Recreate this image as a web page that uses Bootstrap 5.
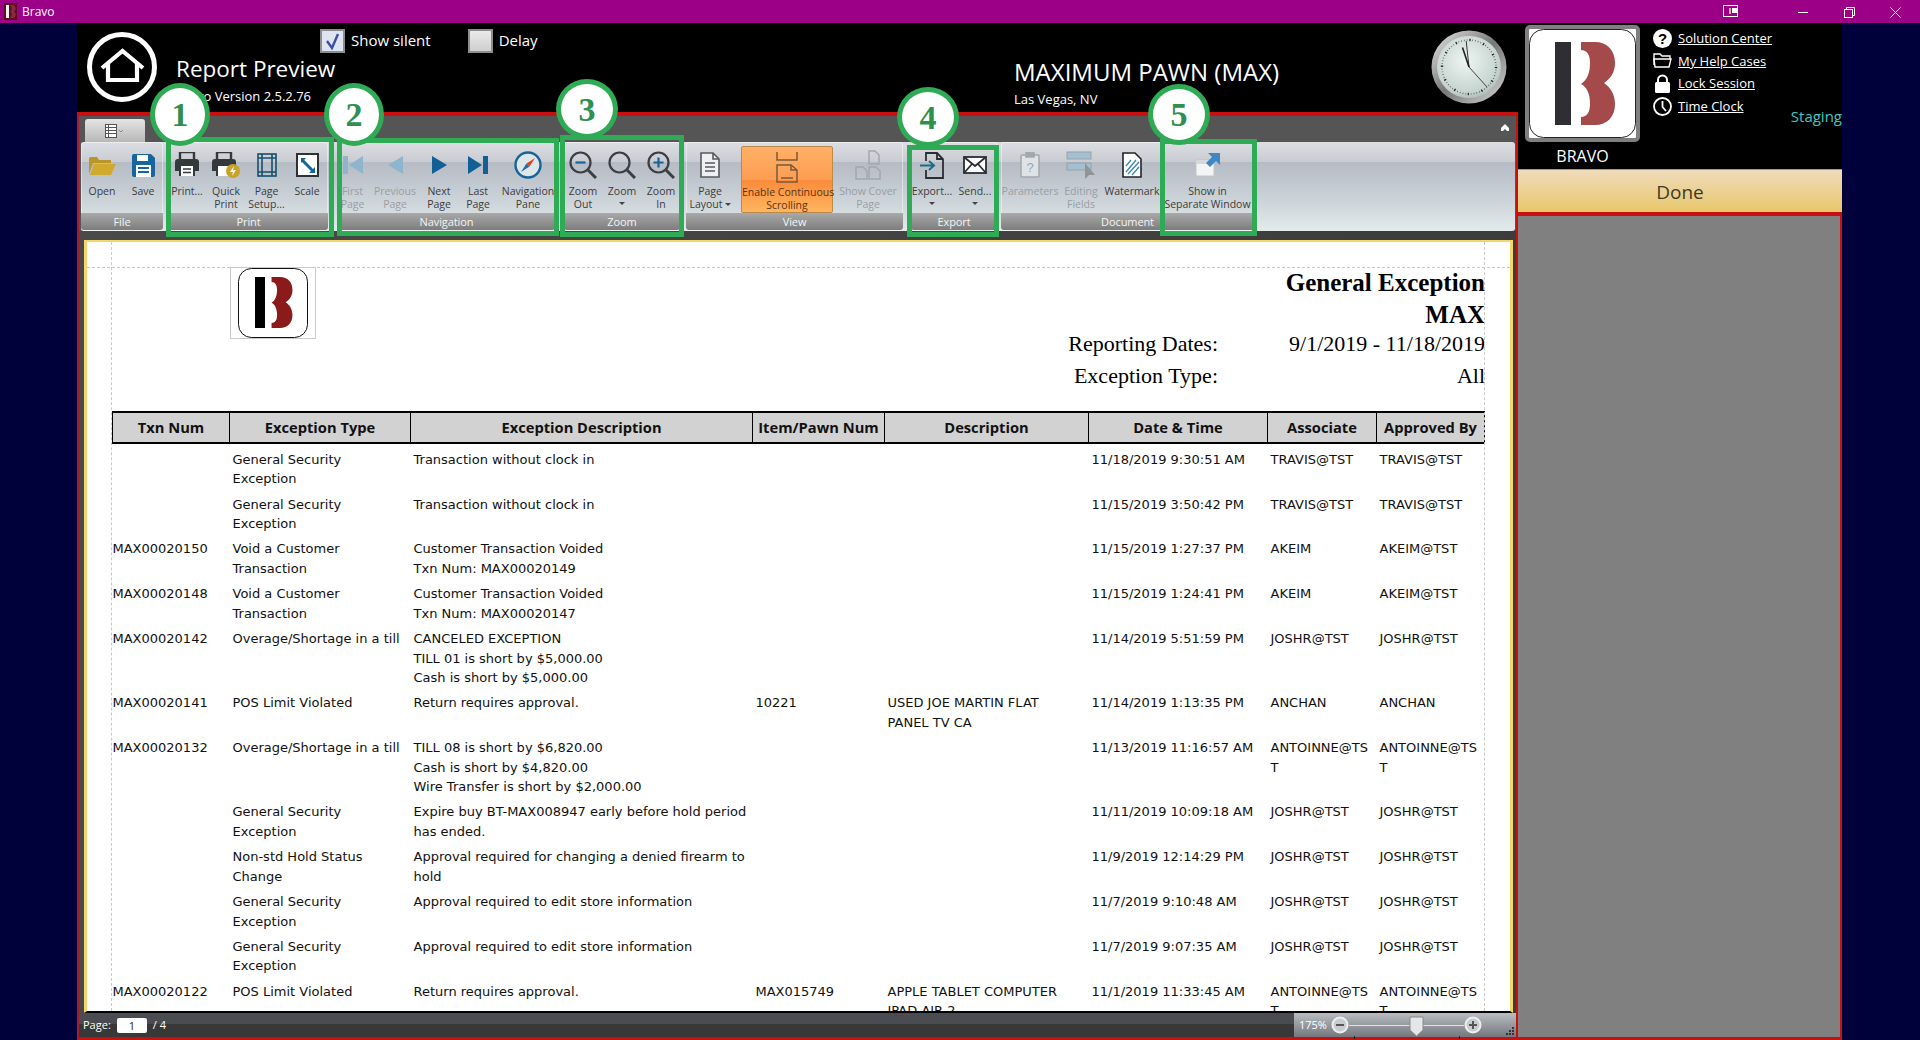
<!DOCTYPE html>
<html lang="en">

<head>
    <meta charset="UTF-8" />
    <meta name="viewport" content="width=device-width, initial-scale=1.0" />
    <title>Bravo - Report Preview</title>
    <link href="https://cdn.jsdelivr.net/npm/bootstrap@5.3.0/dist/css/bootstrap.min.css" rel="stylesheet" />
    <style>
        html,
        body {
            height: 100%;
        }

        body {
            background-color: #00003a;
            font-family: "Open Sans", "Noto Sans", sans-serif;
            color: #fff;
            overflow: hidden;
            position: relative;
        }

        /* window chrome */
        .title-strip {
            height: 23px;
            background-color: #9b0086;
            font-size: 12px;
        }

        .title-strip .app-name {
            margin-left: 5px;
        }

        .win-btn {
            width: 46px;
        }

        .win-snap {
            margin-right: 41px;
        }

        .win-set {
            margin-right: 2px;
        }

        .shell {
            height: 1017px;
            width: 1765px;
            margin-left: 77px;
        }

        .left-side {
            width: 1441px;
        }

        .right-side {
            width: 324px;
        }

        /* top header */
        .top-head {
            height: 90px;
            background: #000;
        }

        .home-btn {
            width: 70px;
            height: 70px;
            margin: 9px 0 0 10px;
        }

        .title-col {
            width: 838px;
            margin-left: 19px;
        }

        .check-row {
            height: 32px;
            margin-left: 144px;
            padding-top: 6px;
            font-size: 15px;
        }

        .fake-check {
            width: 25px;
            height: 24px;
            background: linear-gradient(#e9e9e9, #cfcfcf);
            border: 2px solid #8d8d8d;
            margin-right: 6px;
        }

        .fake-check.is-on {
            background: #dfe4f2;
        }

        .check-gap {
            margin-right: 37px;
        }

        .report-title {
            font-size: 22.5px;
            line-height: 28px;
        }

        .report-ver {
            font-size: 13px;
            line-height: 17px;
            margin-top: 5px;
        }

        .store-col {
            width: 417px;
            padding-top: 34px;
        }

        .store-name {
            font-size: 24px;
            line-height: 30px;
        }

        .store-city {
            font-size: 13px;
            line-height: 18px;
            margin-top: 3px;
        }

        .clock-face {
            width: 76px;
            height: 74px;
            margin-top: 7px;
        }

        /* report frame */
        .report-frame {
            border-top: 4px solid #c81010;
            border-left: 2px solid #a81a2a;
            border-right: 2px solid #c81010;
            border-bottom: 3px solid #c81010;
            background: #555;
            min-height: 0;
        }

        .tab-row {
            height: 26px;
            padding-left: 6px;
            padding-right: 6px;
        }

        .ribbon-tab {
            width: 60px;
            height: 23px;
            margin-top: 3px;
            background: linear-gradient(#e4e4e4, #b8b8b8);
            border-radius: 3px 3px 0 0;
        }

        .ribbon-strip {
            height: 89px;
            margin-left: 2px;
            margin-right: 1px;
            background: linear-gradient(#dcdee2 0, #c9ccd2 22%, #b6bbc4 23%, #cbd2d8 64%, #e4ebeb 100%);
            border-radius: 3px;
            color: #3c3c3c;
        }

        .rb-group {
            border-radius: 3px;
            box-shadow: inset 0 0 0 1px rgba(255, 255, 255, .45);
        }

        .rb-btns {
            height: 71px;
        }

        .rb-cap {
            height: 17px;
            line-height: 17px;
            background: linear-gradient(#a9a9a9, #7d7d7d);
            color: #f4f4f4;
            font-size: 11px;
            text-align: center;
            border-radius: 0 0 3px 3px;
            letter-spacing: -.1px;
        }

        .rb-btn {
            flex: none;
            font-size: 10.5px;
            line-height: 13px;
            text-align: center;
            white-space: nowrap;
        }

        .rb-ico {
            height: 43px;
            display: flex;
            align-items: center;
            justify-content: center;
            padding-top: 3px;
        }

        .rb-off {
            color: #9a9ea3;
        }

        .rb-on {
            background: linear-gradient(#ffb066 0, #fd9e52 50%, #fb8b3a 51%, #ffb560 100%);
            border: 1px solid #b98a4a;
            border-radius: 2px;
            height: 67px;
            margin-top: 4px;
            color: #5a3413;
        }

        .rb-on .rb-ico {
            height: 39px;
            padding-top: 0;
        }

        .tiny-caret {
            display: block;
            width: 0;
            height: 0;
            margin: 4px auto 0;
            border-left: 3px solid transparent;
            border-right: 3px solid transparent;
            border-top: 3px solid #444;
        }

        .tiny-caret.inline-caret {
            display: inline-block;
            margin: 0 0 2px 2px;
        }

        .w29 { width: 29px; }
        .w32 { width: 32px; }
        .w36 { width: 36px; }
        .w38 { width: 38px; }
        .w39 { width: 39px; }
        .w40 { width: 40px; }
        .w42 { width: 42px; }
        .w44 { width: 44px; }
        .w46 { width: 46px; }
        .w48 { width: 48px; }
        .w54 { width: 54px; }
        .w56 { width: 56px; }
        .w58 { width: 58px; }
        .w70 { width: 70px; }
        .w92 { width: 92px; }
        .w93 { width: 93px; }

        .gl4 { margin-left: 4px; }
        .gl6 { margin-left: 6px; }
        .gl7 { margin-left: 7px; }
        .gl8 { margin-left: 8px; }
        .gl9 { margin-left: 9px; }
        .gl10 { margin-left: 10px; }

        /* viewer */
        .viewer-area {
            min-height: 0;
            padding: 9px 0 0 5px;
            background: linear-gradient(90deg, #4a4a4a, #3c3c3c);
        }

        .sheet {
            position: relative;
            background: #fff;
            border-left: 3px solid #f5d66b;
            border-right: 3px solid #f5d66b;
            border-top: 2px solid #f5d66b;
            border-bottom: 2px solid #000;
            margin-right: 3px;
            overflow: hidden;
            color: #000;
        }

        .guide-h {
            position: absolute;
            left: 0;
            right: 0;
            top: 25px;
            border-top: 1px dashed #c9c9c9;
        }

        .guide-v1,
        .guide-v2 {
            position: absolute;
            top: 0;
            bottom: 0;
            border-left: 1px dashed #c9c9c9;
        }

        .guide-v1 {
            left: 24px;
        }

        .guide-v2 {
            left: 1397px;
        }

        .sheet-head {
            height: 146px;
            margin-top: 23px;
            padding-left: 143px;
            padding-right: 25px;
            font-family: "Liberation Serif", serif;
        }

        .sheet-logo {
            width: 86px;
            height: 72px;
            margin-top: 2px;
            border: 1px solid #ccc;
        }

        .sheet-titles {
            padding-top: 2px;
        }

        .sheet-title {
            font-size: 25px;
            font-weight: 700;
            line-height: 32px;
        }

        .sheet-row {
            font-size: 22px;
            line-height: 24px;
            margin-bottom: 8px;
        }

        .sheet-row.first-row {
            margin-top: 1px;
        }

        .sheet-label {
            width: 344px;
        }

        .sheet-value {
            width: 267px;
        }

        .rpt-table {
            table-layout: fixed;
            width: 1372px;
            margin-left: 25px;
            font-family: "DejaVu Sans", sans-serif;
            font-size: 13px;
            line-height: 19.5px;
            color: #111;
            white-space: nowrap;
        }

        .rpt-table th {
            background: #d2d2d2;
            border: 2px solid #000;
            border-width: 2px 1px 2px 1px;
            height: 31px;
            padding: 0;
            font-family: "Open Sans", sans-serif;
            font-size: 14.7px;
            font-weight: 700;
            text-align: center;
            vertical-align: middle;
        }

        .rpt-table td {
            padding: 5.8px 3px 0 3px;
            vertical-align: top;
            overflow: hidden;
        }

        .rpt-table td:first-child {
            padding-left: 0;
        }

        .c1 { width: 117px; }
        .c2 { width: 181px; }
        .c3 { width: 342px; }
        .c4 { width: 132px; }
        .c5 { width: 204px; }
        .c6 { width: 179px; }
        .c7 { width: 109px; }
        .c8 { width: 108px; }

        /* status bar */
        .status-bar {
            height: 24px;
            background: linear-gradient(#4b4c52 0, #4b4c52 45%, #383838 46%, #383838 100%);
            font-size: 11px;
        }

        .page-box {
            width: 30px;
            height: 15px;
            background: #fff;
            color: #222;
            border-radius: 2px;
            line-height: 15px;
            text-align: center;
            margin: 0 6px 0 6px;
        }

        .page-txt {
            margin-left: 4px;
        }

        .zoom-zone {
            width: 222px;
            height: 24px;
            position: relative;
            background: linear-gradient(#b9bcc0, #74787e);
            padding-left: 5px;
        }

        .zoom-track {
            width: 115px;
            border-top: 1px solid #dfe2e4;
            position: relative;
        }

        .zoom-track::before,
        .zoom-track::after {
            content: "";
            position: absolute;
            top: 10px;
            height: 3px;
            border-left: 1px solid #222;
        }

        .zoom-track::before {
            left: 5px;
        }

        .zoom-track::after {
            left: 110px;
        }

        .zoom-thumb {
            position: absolute;
            left: 60px;
            top: -10px;
        }

        .zoom-grip {
            position: absolute;
            right: 1px;
            bottom: 1px;
        }

        /* right panel */
        .side-head {
            height: 146px;
            background: #000;
            padding: 2px 0 0 7px;
        }

        .big-logo {
            width: 115px;
            height: 117px;
            border: 4px solid #7f7f7f;
            border-radius: 5px;
            background: #fff;
        }

        .big-logo-name {
            width: 115px;
            text-align: center;
            font-size: 16px;
            line-height: 20px;
            margin-top: 4px;
        }

        .help-links {
            margin-left: 13px;
            padding-top: 2px;
            font-size: 13px;
        }

        .help-item {
            height: 22.6px;
            line-height: 22px;
        }

        .help-item a {
            color: #fff;
            margin-left: 6px;
        }

        .help-ico {
            width: 19px;
            height: 19px;
        }

        .staging-tag {
            position: absolute;
            right: 78px;
            top: 105px;
            color: #40c8c0;
            font-size: 15px;
        }

        .done-bar {
            height: 43px;
            padding-top: 2px;
            background: linear-gradient(#f0dcbc, #e8c76a);
            border-top: 1px solid #9a9a9a;
            color: #3d3a2a;
            font-size: 19px;
        }

        .side-pane {
            background: #808080;
            border-top: 4px solid #c81010;
            border-right: 2px solid #c81010;
            border-bottom: 3px solid #c81010;
        }

        /* green numbered callouts */
        .call-box {
            position: absolute;
            border: 5px solid #2faa55;
        }

        .box-a { left: 166px; top: 137px; width: 168px; height: 100px; }
        .box-b { left: 337px; top: 138px; width: 222px; height: 98px; }
        .box-c { left: 560px; top: 135px; width: 124px; height: 102px; }
        .box-d { left: 907px; top: 145px; width: 92px; height: 92px; }
        .box-e { left: 1160px; top: 139px; width: 97px; height: 97px; }

        .call-dot {
            position: absolute;
            border: 5px solid #2faa55;
            border-radius: 50%;
            background: #fff;
            color: #2f8f4e;
            font-family: "Liberation Serif", serif;
            font-weight: 700;
            font-size: 34px;
        }

        .dot-a { left: 150px; top: 83px; width: 60px; height: 63px; }
        .dot-b { left: 324px; top: 83px; width: 60px; height: 63px; }
        .dot-c { left: 556px; top: 79px; width: 62px; height: 60px; }
        .dot-d { left: 897px; top: 87px; width: 62px; height: 60px; }
        .dot-e { left: 1148px; top: 84px; width: 62px; height: 61px; }
    </style>
</head>

<body>
    <svg width="0" height="0" class="position-absolute">
        <symbol id="bravo-b" viewBox="0 0 34 83">
            <path d="M0 0H14C26 0 34 8 34 21C34 31 29 37 23 41C29 45 34 52 34 62C34 75 26 83 14 83H0V75C6 75 9 70 9 62C9 52 6 45 0 42C6 38 9 31 9 21C9 13 6 8 0 8Z" />
        </symbol>
    </svg>

    <div class="title-strip d-flex align-items-center">
        <svg class="ms-1" width="13" height="17" viewBox="0 0 13 17">
            <rect width="13" height="17" fill="#5a1020" />
            <rect x="2" y="2" width="3" height="13" fill="#f2f2f2" />
            <use href="#bravo-b" x="6" y="2" width="6" height="13" fill="#8b2a3a" />
        </svg>
        <span class="app-name">Bravo</span>
        <div class="win-set ms-auto d-flex align-items-center">
            <svg class="win-snap" width="16" height="13" viewBox="0 0 16 13" fill="none" stroke="#fff">
                <rect x=".5" y=".5" width="14" height="11" />
                <rect x="6" y="3" width="2" height="6" fill="#caa" stroke="none" />
                <rect x="9.5" y="3.5" width="5" height="4" fill="#fff" />
            </svg>
            <div class="win-btn text-center"><svg width="10" height="10" viewBox="0 0 10 10" stroke="#fff"><path d="M0 5.5H10" /></svg></div>
            <div class="win-btn text-center"><svg width="11" height="11" viewBox="0 0 11 11" fill="none" stroke="#fff"><rect x=".5" y="2.5" width="8" height="8" /><path d="M2.5 2.5V.5H10.5V8.5H8.5" /></svg></div>
            <div class="win-btn text-center"><svg width="11" height="11" viewBox="0 0 11 11" stroke="#fff"><path d="M.5.5L10.5 10.5M10.5.5L.5 10.5" /></svg></div>
        </div>
    </div>

    <div class="shell d-flex">
        <div class="left-side d-flex flex-column">
            <div class="top-head d-flex">
                <svg class="home-btn flex-shrink-0" viewBox="0 0 70 70" fill="none" stroke="#fff">
                    <circle cx="35" cy="35" r="32.5" stroke-width="5" />
                    <path d="M15 36L35.500 19L56 36M21 31V48H50V31" stroke-width="4.200" />
                </svg>
                <div class="title-col">
                    <div class="check-row d-flex align-items-start">
                        <span class="fake-check is-on d-flex align-items-center justify-content-center">
                            <svg width="17" height="18" viewBox="0 0 17 18" fill="none" stroke="#3b50a0" stroke-width="2.4"><path d="M3 9L8 16L14 2" /></svg>
                        </span>
                        <span class="check-gap">Show silent</span>
                        <span class="fake-check"></span>
                        <span>Delay</span>
                    </div>
                    <div class="report-title">Report Preview</div>
                    <div class="report-ver">Bravo Version 2.5.2.76</div>
                </div>
                <div class="store-col">
                    <div class="store-name">MAXIMUM PAWN (MAX)</div>
                    <div class="store-city">Las Vegas, NV</div>
                </div>
                <svg class="clock-face" viewBox="0 0 76 74">
                    <defs>
                        <radialGradient id="clockFill" cx=".45" cy=".4" r=".65">
                            <stop offset="0" stop-color="#eef5f2" />
                            <stop offset=".8" stop-color="#c5d3cf" />
                            <stop offset="1" stop-color="#a9b5b2" />
                        </radialGradient>
                        <linearGradient id="clockRim" x1="0" y1="0" x2="1" y2="1">
                            <stop offset="0" stop-color="#e8e8e8" />
                            <stop offset=".5" stop-color="#777" />
                            <stop offset="1" stop-color="#d8d8d8" />
                        </linearGradient>
                    </defs>
                    <ellipse cx="38" cy="37" rx="37.5" ry="36.5" fill="url(#clockRim)" />
                    <ellipse cx="38" cy="37" rx="32" ry="31" fill="url(#clockFill)" />
                    <circle cx="38" cy="37" r="27" fill="none" stroke="#555" stroke-width="1.500" stroke-dasharray=".7 2.127" />
                    <circle cx="38" cy="37" r="27" fill="none" stroke="#222" stroke-width="2.500" stroke-dasharray="1.200 12.937" />
                    <path d="M38 37L35.2 11" stroke="#333" fill="none" />
                    <path d="M38 37L31.5 17.5" stroke="#222" stroke-width="1.6" fill="none" />
                    <path d="M38 37L56 57" stroke="#444" fill="none" />
                </svg>
            </div>

            <div class="report-frame d-flex flex-column flex-grow-1">
                <div class="tab-row d-flex justify-content-between flex-shrink-0">
                    <div class="ribbon-tab d-flex align-items-center justify-content-center">
                        <svg width="20" height="14" viewBox="0 0 20 14" fill="none" stroke="#555">
                            <rect x=".5" y=".5" width="11" height="13" fill="#fff" />
                            <path d="M.5 3.5H11.5M.5 6.5H11.5M.5 9.5H11.5M3.5 .5V13.5" />
                            <path d="M14 6L16 8L18 6" stroke="#888" />
                        </svg>
                    </div>
                    <svg class="mt-2" width="10" height="8" viewBox="0 0 10 8" fill="#fff"><path d="M5 0L9 4V7H7L5 5L3 7H1V4Z" /></svg>
                </div>

                <div class="ribbon-strip d-flex flex-shrink-0">
                    <div class="rb-group">
                        <div class="rb-btns d-flex">
                            <div class="rb-btn w42">
                                <div class="rb-ico"><svg width="29" height="21" viewBox="0 0 29 21"><path d="M1 3V19L5 8H23V5H11L9 2H2Z" fill="#b8962a" /><path d="M6 9H28L23 20H2Z" fill="#d0a92f" /></svg></div>Open
                            </div>
                            <div class="rb-btn w40">
                                <div class="rb-ico"><svg width="23" height="23" viewBox="0 0 23 23"><path d="M2 0H19L23 4V21Q23 23 21 23H2Q0 23 0 21V2Q0 0 2 0Z" fill="#16659c" /><rect x="5" y="1" width="11" height="6" fill="#fff" /><rect x="4" y="11" width="15" height="12" fill="#fff" /><path d="M6 14H17M6 18H17" stroke="#16659c" stroke-width="2" /></svg></div>Save
                            </div>
                        </div>
                        <div class="rb-cap">File</div>
                    </div>

                    <div class="rb-group gl6">
                        <div class="rb-btns d-flex">
                            <div class="rb-btn w36">
                                <div class="rb-ico"><svg width="24" height="26" viewBox="0 0 24 26"><path d="M5 7V0H19V7" fill="none" stroke="#34393e" stroke-width="2.4" /><path d="M3 7H21Q24 7 24 10V19H20V24H4V19H0V10Q0 7 3 7Z" fill="#34393e" /><rect x="6" y="14" width="12" height="10" fill="#fff" /><path d="M8 17H16M8 20.500H16" stroke="#34393e" stroke-width="1.500" /></svg></div>Print...
                            </div>
                            <div class="rb-btn w42">
                                <div class="rb-ico"><svg width="28" height="26" viewBox="0 0 28 26"><path d="M5 7V0H19V7" fill="none" stroke="#34393e" stroke-width="2.4" /><path d="M3 7H21Q24 7 24 10V19H20V24H4V19H0V10Q0 7 3 7Z" fill="#34393e" /><rect x="6" y="14" width="12" height="10" fill="#fff" /><circle cx="21" cy="19" r="7" fill="#c9a227" /><path d="M22 14L18 20H21L20 24L24 18H21Z" fill="#fff" /></svg></div>Quick<br>Print
                            </div>
                            <div class="rb-btn w39">
                                <div class="rb-ico"><svg width="20" height="24" viewBox="0 0 20 24" fill="none" stroke="#14506f" stroke-width="1.6"><rect x="1" y="1" width="18" height="22" /><path d="M5 1V23M15 1V23M1 5H19M1 19H19" /></svg></div>Page<br>Setup...
                            </div>
                            <div class="rb-btn w42">
                                <div class="rb-ico"><svg width="23" height="24" viewBox="0 0 23 24"><rect width="23" height="24" fill="#2d3238" /><rect x="2" y="2" width="19" height="20" fill="#fff" /><path d="M5 5H10L8.200 7L17 16L19 14V20H13L15 18L6 9L5 10Z" fill="#14659a" /></svg></div>Scale
                            </div>
                        </div>
                        <div class="rb-cap">Print</div>
                    </div>

                    <div class="rb-group gl10">
                        <div class="rb-btns d-flex">
                            <div class="rb-btn rb-off w29">
                                <div class="rb-ico"><svg width="20" height="18" viewBox="0 0 20 18" fill="#8fb5cd"><rect width="5" height="18" /><path d="M20 0V18L6 9Z" /></svg></div>First<br>Page
                            </div>
                            <div class="rb-btn rb-off w56">
                                <div class="rb-ico"><svg width="15" height="18" viewBox="0 0 15 18" fill="#8fb5cd"><path d="M15 0V18L0 9Z" /></svg></div>Previous<br>Page
                            </div>
                            <div class="rb-btn w32">
                                <div class="rb-ico"><svg width="15" height="18" viewBox="0 0 15 18" fill="#125f96"><path d="M0 0V18L15 9Z" /></svg></div>Next<br>Page
                            </div>
                            <div class="rb-btn w46">
                                <div class="rb-ico"><svg width="20" height="18" viewBox="0 0 20 18" fill="#125f96"><path d="M0 0V18L14 9Z" /><rect x="15" width="5" height="18" /></svg></div>Last<br>Page
                            </div>
                            <div class="rb-btn w54">
                                <div class="rb-ico"><svg width="28" height="28" viewBox="0 0 28 28"><circle cx="14" cy="14" r="12.500" fill="#dfe6ea" stroke="#14659a" stroke-width="2.400" /><path d="M21 7L15.500 15.500L12.500 12.500Z" fill="#d8432a" /><path d="M7 21L12.500 12.500L15.500 15.500Z" fill="#2a6a9a" /></svg></div>Navigation<br>Pane
                            </div>
                        </div>
                        <div class="rb-cap">Navigation</div>
                    </div>

                    <div class="rb-group gl9">
                        <div class="rb-btns d-flex">
                            <div class="rb-btn w38">
                                <div class="rb-ico"><svg width="28" height="28" viewBox="0 0 28 28" fill="none" stroke="#3a3f44" stroke-width="2.200"><circle cx="11.500" cy="11.500" r="10" /><path d="M19 19L27 27" stroke-width="3" /><path d="M6.500 11.500H16.500" stroke="#14659a" /></svg></div>Zoom<br>Out
                            </div>
                            <div class="rb-btn w40">
                                <div class="rb-ico"><svg width="28" height="28" viewBox="0 0 28 28" fill="none" stroke="#3a3f44" stroke-width="2.200"><circle cx="11.500" cy="11.500" r="10" /><path d="M19 19L27 27" stroke-width="3" /></svg></div>Zoom<span class="tiny-caret"></span>
                            </div>
                            <div class="rb-btn w38">
                                <div class="rb-ico"><svg width="28" height="28" viewBox="0 0 28 28" fill="none" stroke="#3a3f44" stroke-width="2.200"><circle cx="11.500" cy="11.500" r="10" /><path d="M19 19L27 27" stroke-width="3" /><path d="M6.500 11.500H16.500M11.500 6.500V16.500" stroke="#14659a" /></svg></div>Zoom<br>In
                            </div>
                        </div>
                        <div class="rb-cap">Zoom</div>
                    </div>

                    <div class="rb-group gl6">
                        <div class="rb-btns d-flex">
                            <div class="rb-btn w48">
                                <div class="rb-ico"><svg width="20" height="26" viewBox="0 0 20 26" fill="#eef0f2" stroke="#55595e" stroke-width="1.600"><path d="M1 1H13L19 7V25H1Z" /><path d="M13 1V7H19M5 11H15M5 15H15M5 19H15" fill="none" /></svg></div>Page<br>Layout<span class="tiny-caret inline-caret"></span>
                            </div>
                            <div class="rb-btn rb-on gl7 w92">
                                <div class="rb-ico"><svg width="22" height="32" viewBox="0 0 22 32" fill="none" stroke="#7a5a3a" stroke-width="1.500"><path d="M1 1V9H21V1" /><path d="M1 14H15L21 19V31H1Z" /><path d="M15 14V19H21M5 27H17" /></svg></div>Enable Continuous<br>Scrolling
                            </div>
                            <div class="rb-btn rb-off w70">
                                <div class="rb-ico"><svg width="28" height="30" viewBox="0 0 28 30" fill="none" stroke="#a4a8ac" stroke-width="1.500"><path d="M15 1H21L25 5V14H15ZM2 17H9L13 21V29H2ZM15 17H22L26 21V29H15Z" /></svg></div>Show Cover<br>Page
                            </div>
                        </div>
                        <div class="rb-cap">View</div>
                    </div>

                    <div class="rb-group gl8">
                        <div class="rb-btns d-flex">
                            <div class="rb-btn w42">
                                <div class="rb-ico"><svg width="25" height="27" viewBox="0 0 25 27" fill="none" stroke="#2a2e33" stroke-width="1.800"><path d="M6 9V1H17L23 7V26H6V18" /><path d="M17 1V7H23" /><path d="M0 13.500H13M9 9L14 13.500L9 18" stroke="#14708a" stroke-width="2" /></svg></div>Export...<span class="tiny-caret"></span>
                            </div>
                            <div class="rb-btn w44">
                                <div class="rb-ico"><svg width="24" height="18" viewBox="0 0 24 18" fill="#fff" stroke="#2a2e33" stroke-width="1.800"><rect x="1" y="1" width="22" height="16" /><path d="M1 1L12 10L23 1M1 17L9 8M23 17L15 8" fill="none" /></svg></div>Send...<span class="tiny-caret"></span>
                            </div>
                        </div>
                        <div class="rb-cap">Export</div>
                    </div>

                    <div class="rb-group gl4">
                        <div class="rb-btns d-flex">
                            <div class="rb-btn rb-off w58">
                                <div class="rb-ico"><svg width="20" height="26" viewBox="0 0 20 26" fill="#dfe3e6" stroke="#a3a8ad" stroke-width="1.500"><rect x="1" y="3" width="18" height="22" rx="1" /><rect x="6" y="0" width="8" height="5" fill="#a3a8ad" /><text x="10" y="20" font-family="Liberation Sans" font-size="13" text-anchor="middle" fill="#8fa8bb" stroke="none">?</text></svg></div>Parameters
                            </div>
                            <div class="rb-btn rb-off w44">
                                <div class="rb-ico"><svg width="30" height="28" viewBox="0 0 30 28" stroke="#9aa2a8"><rect x="1" y="1" width="24" height="7" fill="#a3bfd2" /><rect x="1" y="12" width="24" height="7" fill="#a3bfd2" /><path d="M19 12V28L23 24L29 24Z" fill="#8f9499" stroke="none" /></svg></div>Editing<br>Fields
                            </div>
                            <div class="rb-btn w58">
                                <div class="rb-ico"><svg width="20" height="26" viewBox="0 0 20 26" fill="#fff" stroke="#20242a" stroke-width="1.600"><path d="M1 1H13L19 7V25H1Z" /><path d="M4 20L14 8M6 22L17 10M10 23L17 15M4 14L9 8" stroke="#3b86b8" stroke-width="1.300" fill="none" /></svg></div>Watermark
                            </div>
                            <div class="rb-btn w93">
                                <div class="rb-ico"><svg width="26" height="26" viewBox="0 0 26 26"><rect x="1" y="8" width="18" height="16" fill="#f2f4f6" stroke="#c2c6ca" /><rect x="1" y="8" width="18" height="4" fill="#d5d9dd" /><path d="M13 1H25V13L21 9L15 15L11 11L17 5Z" fill="#3f86c2" /></svg></div>Show in<br>Separate Window
                            </div>
                        </div>
                        <div class="rb-cap">Document</div>
                    </div>
                </div>

                <div class="viewer-area flex-grow-1 d-flex flex-column">
                    <div class="sheet flex-grow-1">
                        <div class="guide-h"></div>
                        <div class="guide-v1"></div>
                        <div class="guide-v2"></div>
                        <div class="sheet-head d-flex">
                            <div class="sheet-logo d-flex align-items-center justify-content-center flex-shrink-0">
                                <svg width="70" height="70" viewBox="0 0 70 70">
                                    <rect x=".5" y=".5" width="69" height="69" rx="13" fill="#fff" stroke="#111" />
                                    <rect x="17" y="9" width="10" height="51" fill="#000" />
                                    <use href="#bravo-b" x="33" y="9" width="22" height="51" fill="#8b1a1a" />
                                </svg>
                            </div>
                            <div class="sheet-titles ms-auto text-end">
                                <div class="sheet-title">General Exception</div>
                                <div class="sheet-title">MAX</div>
                                <div class="sheet-row first-row d-flex">
                                    <div class="sheet-label">Reporting Dates:</div>
                                    <div class="sheet-value">9/1/2019 - 11/18/2019</div>
                                </div>
                                <div class="sheet-row d-flex">
                                    <div class="sheet-label">Exception Type:</div>
                                    <div class="sheet-value">All</div>
                                </div>
                            </div>
                        </div>
                        <table class="rpt-table">
                            <thead>
                                <tr>
                                    <th class="c1">Txn Num</th>
                                    <th class="c2">Exception Type</th>
                                    <th class="c3">Exception Description</th>
                                    <th class="c4">Item/Pawn Num</th>
                                    <th class="c5">Description</th>
                                    <th class="c6">Date &amp; Time</th>
                                    <th class="c7">Associate</th>
                                    <th class="c8">Approved By</th>
                                </tr>
                            </thead>
                            <tbody>
                                <tr><td></td><td>General Security<br>Exception</td><td>Transaction without clock in</td><td></td><td></td><td>11/18/2019 9:30:51 AM</td><td>TRAVIS@TST</td><td>TRAVIS@TST</td></tr>
                                <tr><td></td><td>General Security<br>Exception</td><td>Transaction without clock in</td><td></td><td></td><td>11/15/2019 3:50:42 PM</td><td>TRAVIS@TST</td><td>TRAVIS@TST</td></tr>
                                <tr><td>MAX00020150</td><td>Void a Customer<br>Transaction</td><td>Customer Transaction Voided<br>Txn Num: MAX00020149</td><td></td><td></td><td>11/15/2019 1:27:37 PM</td><td>AKEIM</td><td>AKEIM@TST</td></tr>
                                <tr><td>MAX00020148</td><td>Void a Customer<br>Transaction</td><td>Customer Transaction Voided<br>Txn Num: MAX00020147</td><td></td><td></td><td>11/15/2019 1:24:41 PM</td><td>AKEIM</td><td>AKEIM@TST</td></tr>
                                <tr><td>MAX00020142</td><td>Overage/Shortage in a till</td><td>CANCELED EXCEPTION<br>TILL 01 is short by $5,000.00<br>Cash is short by $5,000.00</td><td></td><td></td><td>11/14/2019 5:51:59 PM</td><td>JOSHR@TST</td><td>JOSHR@TST</td></tr>
                                <tr><td>MAX00020141</td><td>POS Limit Violated</td><td>Return requires approval.</td><td>10221</td><td>USED JOE MARTIN FLAT<br>PANEL TV CA</td><td>11/14/2019 1:13:35 PM</td><td>ANCHAN</td><td>ANCHAN</td></tr>
                                <tr><td>MAX00020132</td><td>Overage/Shortage in a till</td><td>TILL 08 is short by $6,820.00<br>Cash is short by $4,820.00<br>Wire Transfer is short by $2,000.00</td><td></td><td></td><td>11/13/2019 11:16:57 AM</td><td>ANTOINNE@TS<br>T</td><td>ANTOINNE@TS<br>T</td></tr>
                                <tr><td></td><td>General Security<br>Exception</td><td>Expire buy BT-MAX008947 early before hold period<br>has ended.</td><td></td><td></td><td>11/11/2019 10:09:18 AM</td><td>JOSHR@TST</td><td>JOSHR@TST</td></tr>
                                <tr><td></td><td>Non-std Hold Status<br>Change</td><td>Approval required for changing a denied firearm to<br>hold</td><td></td><td></td><td>11/9/2019 12:14:29 PM</td><td>JOSHR@TST</td><td>JOSHR@TST</td></tr>
                                <tr><td></td><td>General Security<br>Exception</td><td>Approval required to edit store information</td><td></td><td></td><td>11/7/2019 9:10:48 AM</td><td>JOSHR@TST</td><td>JOSHR@TST</td></tr>
                                <tr><td></td><td>General Security<br>Exception</td><td>Approval required to edit store information</td><td></td><td></td><td>11/7/2019 9:07:35 AM</td><td>JOSHR@TST</td><td>JOSHR@TST</td></tr>
                                <tr><td>MAX00020122</td><td>POS Limit Violated</td><td>Return requires approval.</td><td>MAX015749</td><td>APPLE TABLET COMPUTER<br>IPAD AIR 2</td><td>11/1/2019 11:33:45 AM</td><td>ANTOINNE@TS<br>T</td><td>ANTOINNE@TS<br>T</td></tr>
                            </tbody>
                        </table>
                    </div>
                </div>

                <div class="status-bar d-flex align-items-center flex-shrink-0">
                    <span class="page-txt">Page:</span>
                    <span class="page-box">1</span>
                    <span>/ 4</span>
                    <div class="zoom-zone ms-auto d-flex align-items-center">
                        <span class="me-1">175%</span>
                        <svg width="18" height="18" viewBox="0 0 18 18"><circle cx="9" cy="9" r="7.500" fill="#c9cccf" stroke="#eee" stroke-width="2" /><path d="M5 9H13" stroke="#555" stroke-width="2" /></svg>
                        <div class="zoom-track">
                            <svg class="zoom-thumb" width="15" height="21" viewBox="0 0 15 21"><path d="M1 1H14V14L7.500 20L1 14Z" fill="#e4e6e8" stroke="#888" /></svg>
                        </div>
                        <svg width="18" height="18" viewBox="0 0 18 18"><circle cx="9" cy="9" r="7.500" fill="#c9cccf" stroke="#eee" stroke-width="2" /><path d="M5 9H13M9 5V13" stroke="#555" stroke-width="2" /></svg>
                        <svg class="zoom-grip" width="10" height="10" viewBox="0 0 10 10" fill="#333"><rect x="7" y="1" width="2" height="2" /><rect x="4" y="4" width="2" height="2" /><rect x="7" y="4" width="2" height="2" /><rect x="1" y="7" width="2" height="2" /><rect x="4" y="7" width="2" height="2" /><rect x="7" y="7" width="2" height="2" /></svg>
                    </div>
                </div>
            </div>
        </div>

        <div class="right-side d-flex flex-column">
            <div class="side-head d-flex flex-shrink-0">
                <div>
                    <div class="big-logo d-flex align-items-center justify-content-center">
                        <svg width="107" height="109" viewBox="0 0 107 109">
                            <rect x=".5" y=".5" width="106" height="108" rx="14" fill="#fff" stroke="#222" />
                            <rect x="26" y="13" width="16" height="83" fill="#2e2e33" />
                            <use href="#bravo-b" x="52" y="13" width="34" height="83" fill="#a54a4a" />
                        </svg>
                    </div>
                    <div class="big-logo-name">BRAVO</div>
                </div>
                <div class="help-links">
                    <div class="help-item d-flex align-items-center">
                        <svg class="help-ico" viewBox="0 0 19 19"><circle cx="9.500" cy="9.500" r="9.500" fill="#fff" /><text x="9.500" y="15" font-family="Liberation Sans" font-size="15" font-weight="700" text-anchor="middle" fill="#000">?</text></svg>
                        <a href="#">Solution Center</a>
                    </div>
                    <div class="help-item d-flex align-items-center">
                        <svg class="help-ico" viewBox="0 0 19 19" fill="none" stroke="#fff" stroke-width="1.400"><path d="M1 14V3H7L9 5H17V8" /><path d="M1 8H18L16 16H2Z" /></svg>
                        <a href="#">My Help Cases</a>
                    </div>
                    <div class="help-item d-flex align-items-center">
                        <svg class="help-ico" viewBox="0 0 19 19"><path d="M5 9V6A4.500 4.500 0 0 1 14 6V9" fill="none" stroke="#fff" stroke-width="2" /><rect x="2" y="8" width="15" height="11" rx="1.500" fill="#fff" /></svg>
                        <a href="#">Lock Session</a>
                    </div>
                    <div class="help-item d-flex align-items-center">
                        <svg class="help-ico" viewBox="0 0 19 19" fill="none" stroke="#fff" stroke-width="1.800"><circle cx="9.500" cy="9.500" r="8.500" /><path d="M9.500 4V10L13 14" /></svg>
                        <a href="#">Time Clock</a>
                    </div>
                </div>
            </div>
            <div class="done-bar d-flex align-items-center justify-content-center flex-shrink-0">Done</div>
            <div class="side-pane flex-grow-1"></div>
        </div>
    </div>

    <div class="staging-tag">Staging</div>

    <div class="call-box box-a"></div>
    <div class="call-box box-b"></div>
    <div class="call-box box-c"></div>
    <div class="call-box box-d"></div>
    <div class="call-box box-e"></div>
    <div class="call-dot dot-a d-flex align-items-center justify-content-center">1</div>
    <div class="call-dot dot-b d-flex align-items-center justify-content-center">2</div>
    <div class="call-dot dot-c d-flex align-items-center justify-content-center">3</div>
    <div class="call-dot dot-d d-flex align-items-center justify-content-center">4</div>
    <div class="call-dot dot-e d-flex align-items-center justify-content-center">5</div>

    <script src="https://cdn.jsdelivr.net/npm/bootstrap@5.3.0/dist/js/bootstrap.bundle.min.js"></script>
</body>

</html>
